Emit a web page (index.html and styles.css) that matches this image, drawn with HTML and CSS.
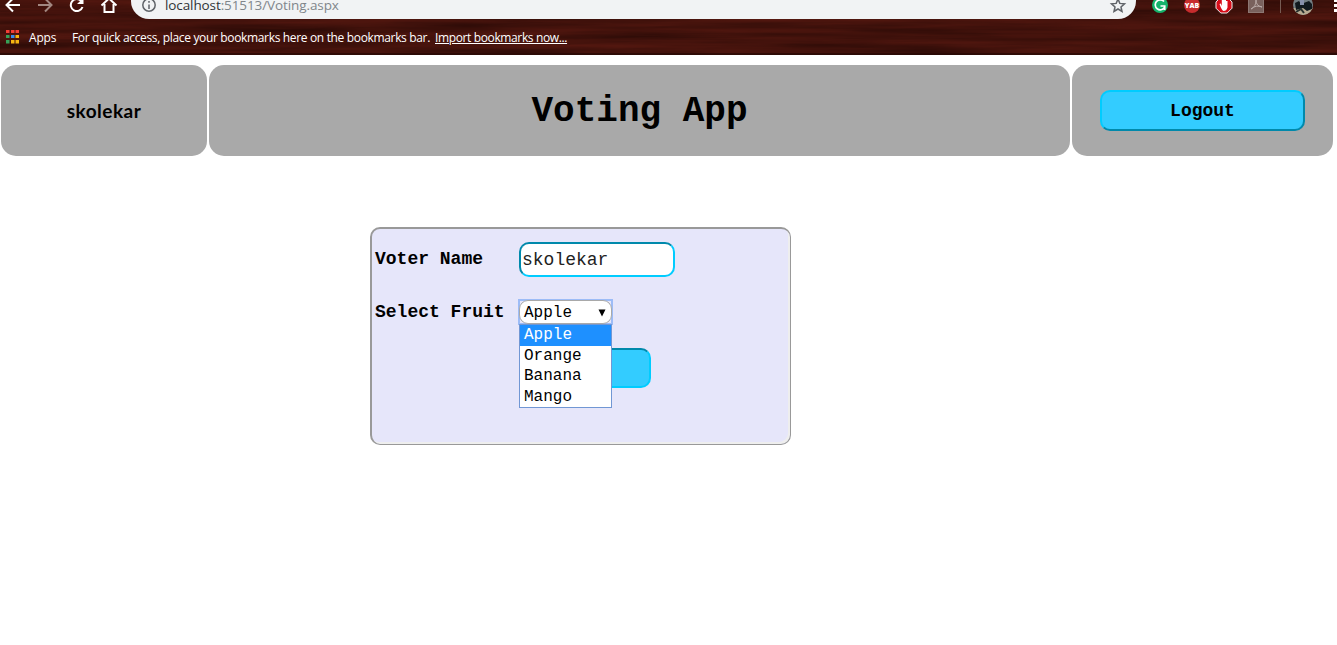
FILE: index.html
```html
<!DOCTYPE html>
<html lang="en">
<head>
<meta charset="utf-8">
<title>Voting App</title>
<link rel="stylesheet" href="styles.css">
</head>
<body>
<div class="chrome">
  <svg class="wood" width="1337" height="55" aria-hidden="true">
    <filter id="grain" x="0" y="0" width="100%" height="100%" color-interpolation-filters="sRGB">
      <feTurbulence type="fractalNoise" baseFrequency="0.005 0.12" numOctaves="4" seed="8"/>
      <feColorMatrix values="0.22 0 0 0 0.15  0.07 0 0 0 0.035  0.05 0 0 0 0.02  0 0 0 0 1"/>
    </filter>
    <rect width="1337" height="55" filter="url(#grain)"/>
    <rect y="53" width="1337" height="2" fill="#260804" opacity=".7"/>
  </svg>
  <div class="toolbar">
    <svg class="nav" width="131" height="19" fill="none" stroke="#fff" stroke-width="2">
      <path d="M20 5H7M13 -1.500L6.500 5L13 11.500"/>
      <path d="M38 5H51M45 -1.500L51.500 5L45 11.500" stroke="#a28780"/>
      <path d="M81.200 1A6 6 0 1 0 82.500 7"/><path d="M83.500 -2V4H77Z" fill="#fff" stroke="none"/>
      <path d="M101.500 5.500L109 -1.500L116.500 5.500M104.500 4V12H113.500V4"/>
    </svg>
    <div class="address">
      <svg width="16" height="15" fill="none" stroke="#5f6368" stroke-width="1.500"><circle cx="8" cy="5" r="6.200"/><path d="M8 4.500V9M8 1V2.700"/></svg>
      <span class="url"><span class="host">localhost</span>:51513/Voting.aspx</span>
      <svg class="star" width="18" height="15" fill="none" stroke="#5f6368" stroke-width="1.500"><path d="M9 -1L10.800 3.400L15.500 3.800L12 6.900L13 11.500L9 9L5 11.500L6 6.900L2.500 3.800L7.200 3.400Z"/></svg>
    </div>
    <svg class="extensions" width="201" height="19">
      <circle cx="24" cy="5" r="8" fill="#15b36b"/>
      <path d="M28 1.500A5 5 0 1 0 28.500 7.500M24.500 6H28.700V10" fill="none" stroke="#fff" stroke-width="1.700"/>
      <circle cx="56" cy="5" r="8" fill="#c72c2d"/>
      <text class="yab" x="56" y="7.500" text-anchor="middle">YAB</text>
      <path d="M84.800 -3H91.200L96 2V8.200L91.200 13H84.800L80 8.200V2Z" fill="#d80d19" stroke="#eee"/>
      <path d="M83.500 4L84.800 3.500L85.800 6V-1H87V3V-2H88.500V3V-1H90V4V1H91.500V7.500Q90.500 11 87.500 11Q85.500 10 83.500 4Z" fill="#fff"/>
      <rect x="112.500" y="-3" width="15" height="15.500" fill="#79615d" stroke="#8d7773"/>
      <path d="M115 9Q120 7 120 0Q120 6 126 7Q120 4.500 115 9" fill="none" stroke="#b9aaa7"/>
      <path d="M144.500 0V13" stroke="#765b53"/>
      <clipPath id="avatar"><circle cx="167" cy="5" r="10"/></clipPath>
      <g clip-path="url(#avatar)"><path fill="#737e83" d="M157 -5H177V15H157Z"/><path fill="#b7aa91" d="M157 8H177V15H157Z"/><path fill="#11191e" d="M159 3L163 1L165 4L173 1L176 4V9L171 11L167 8L160 10Z"/><path fill="#8790ab" d="M164 0H168V5H164Z"/><path d="M160 12L165 9L168 13" stroke="#27312f" stroke-width="2" fill="none"/></g>
      <path d="M199.500 -1V2M199.500 4V7M199.500 9V12" stroke="#fff" stroke-width="3"/>
    </svg>
  </div>
  <div class="bookmarks">
    <svg width="13" height="14"><path fill="#f33d35" d="M0 0h3.500v3H0zM5 0h3.500v3H5zM9.500 0h3.500v3h-3.500z"/><path fill="#36a258" d="M0 5h3.500v3H0zM0 10h3.500v3.500H0z"/><path fill="#348bf0" d="M5 5h3.500v3H5z"/><path fill="#f6b511" d="M9.500 5h3.500v3h-3.500zM5 10h3.500v3.500H5zM9.500 10h3.500v3.500h-3.500z"/></svg>
    <span class="apps">Apps</span>
    <span class="hint">For quick access, place your bookmarks here on the bookmarks bar.</span>
    <a class="import">Import bookmarks now...</a>
  </div>
</div>
<header class="header">
  <div class="panel user">skolekar</div>
  <h1 class="panel title">Voting App</h1>
  <div class="panel account"><button class="logout">Logout</button></div>
</header>
<main class="ballot">
  <label class="label name-label">Voter Name</label>
  <input class="name" value="skolekar">
  <label class="label fruit-label">Select Fruit</label>
  <div class="fruit">
    <div class="focus"><div class="select"><span>Apple</span><svg width="8" height="8"><path d="M.5 .5H7.500L4 7.500Z"/></svg></div></div>
    <div class="options"><div class="option selected">Apple</div><div class="option">Orange</div><div class="option">Banana</div><div class="option">Mango</div></div>
  </div>
  <button class="vote" aria-label="Vote"></button>
</main>
</body>
</html>
```
FILE: styles.css
```css
* { box-sizing: border-box; }
body { margin: 0; height: 645px; overflow: hidden; background: #fff; color: #000; font-family: "Liberation Mono", monospace; }
.chrome { position: relative; height: 55px; overflow: hidden; background: #421109; font-family: "Open Sans", sans-serif; }
.wood { position: absolute; inset: 0; }
.toolbar { position: relative; display: flex; height: 19px; }
.nav, .extensions { display: block; flex: none; }
.address { display: flex; width: 1005px; height: 19px; padding: 0 9px 0 10px; border-radius: 0 0 18px 18px; background: #f1f3f4; color: #80868b; }
.url { margin-left: 8px; margin-top: -4px; font-size: 13.5px; line-height: 19px; letter-spacing: -.1px; white-space: nowrap; }
.host { color: #303337; }
.star { margin-left: auto; }
.yab { fill: #fff; font: 900 7px "Open Sans", sans-serif; }
.bookmarks { position: relative; display: flex; align-items: center; height: 36px; padding-left: 6px; color: #fff; font-size: 12px; white-space: nowrap; }
.apps { width: 43px; margin-left: 10px; letter-spacing: -.2px; }
.hint { width: 363px; letter-spacing: -.34px; }
.import { letter-spacing: -.37px; text-decoration: underline; }
.header { display: flex; gap: 2px; padding: 10px 4px 0 1px; }
.panel { display: flex; align-items: center; justify-content: center; height: 91px; margin: 0; border-radius: 15px; background: #a9a9a9; }
.user { width: 206px; padding-bottom: 1px; font: bold 19px Lato, sans-serif; letter-spacing: .5px; }
.title { width: 861px; padding-top: 2px; font-size: 36px; }
.account { width: 261px; }
.logout { width: 205px; height: 41px; padding: 0; border: 2px outset #0cf; border-radius: 10px; background: #3cf; font: bold 18px "Liberation Mono", monospace; color: #000; }
.ballot { display: grid; grid-template-columns: 144px 1fr; grid-template-rows: 35px 22px 26px 23px 40px; width: 421px; height: 218px; margin: 71px 0 0 370px; padding: 13px 3px; border: solid #999; border-width: 2px 1px 1px 2px; border-radius: 10px; background: #e6e6fa; box-shadow: inset -2px -2px #eee; }
.label { font-size: 18px; font-weight: bold; line-height: 20px; }
.name-label { grid-area: 1 / 1; padding-top: 7px; }
.fruit-label { grid-area: 3 / 1; padding-top: 3px; }
.name { grid-area: 1 / 2; width: 156px; height: 35px; padding: 1px; border: 2px inset #0cf; border-radius: 10px; background: #fff; font: 18px "Liberation Mono", monospace; color: #222; }
.fruit { grid-area: 3 / 2; position: relative; width: 95px; margin-left: -1px; font-size: 16px; }
.focus { height: 26px; border: 2px solid #9dbcf7; background: #e6e6fa; }
.select { display: flex; align-items: center; justify-content: space-between; height: 24px; margin: -1px; padding: 1px 5px 0 4px; border: 1px solid #a9a9a9; border-radius: 9px; background: #fff; }
.options { position: absolute; z-index: 1; top: 25px; left: 1px; width: 93px; height: 84px; border: 1px solid #7197d4; background: #fff; }
.option { height: 20.4px; padding-left: 4px; line-height: 20px; }
.selected { height: 21px; color: #fff; background: #1e90ff; }
.vote { grid-area: 5 / 2; width: 132px; height: 40px; border: 2px inset #0cf; border-radius: 10px; background: #3cf; }
```
